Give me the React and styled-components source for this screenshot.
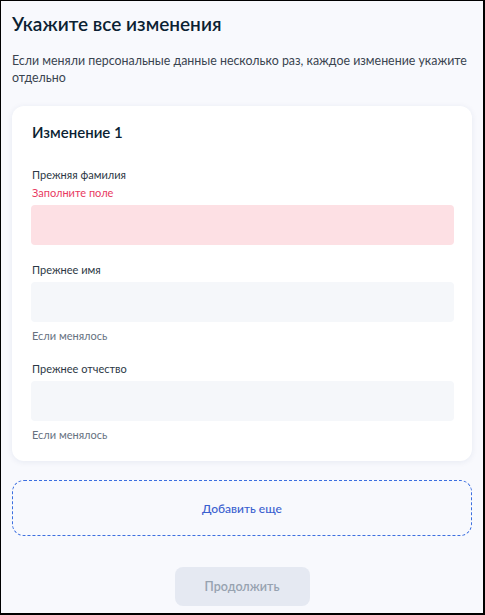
import React from 'react';
import styled, { createGlobalStyle } from 'styled-components';

const GlobalStyle = createGlobalStyle`
  html, body {
    margin: 0;
    padding: 0;
    background: #fff;
  }
  * {
    box-sizing: border-box;
  }
`;

const Page = styled.div`
  width: 485px;
  height: 615px;
  border-style: solid;
  border-color: #000;
  border-width: 1px 2px 2px 1px;
  background: #f8f9fd;
  font-family: Lato, 'Noto Sans', sans-serif;
  color: #0b1f33;
  padding: 0 11px;
  display: flex;
  flex-direction: column;
  overflow: hidden;
`;

const Title = styled.h1`
  margin: 9px 0 0;
  font-size: 19px;
  line-height: 28px;
  font-weight: 600;
`;

const Lead = styled.p`
  margin: 14px 0 0;
  font-size: 12.4px;
  line-height: 17px;
  color: #3a4450;
`;

const Card = styled.section`
  margin-top: 20px;
  background: #fff;
  border-radius: 12px;
  box-shadow: 0 1px 6px rgba(30, 55, 110, 0.08);
  padding: 15px 18px 18px 19px;
  display: flex;
  flex-direction: column;
`;

const CardTitle = styled.h2`
  margin: 0 0 24px 1px;
  font-size: 15px;
  line-height: 22px;
  font-weight: 600;
`;

const Field = styled.div`
  display: flex;
  flex-direction: column;
  & + & {
    margin-top: 17px;
  }
`;

const Label = styled.div`
  font-size: 11px;
  line-height: 16px;
  color: #2c3845;
  margin: 0 0 4px 1px;
`;

const Error = styled.div`
  font-size: 11px;
  line-height: 16px;
  color: #e83a5f;
  margin: -2px 0 4px 1px;
`;

const Input = styled.div`
  height: 40px;
  border-radius: 4px;
  background: ${p => (p.$error ? '#fde0e4' : '#f5f7fa')};
`;

const Hint = styled.div`
  font-size: 11px;
  line-height: 16px;
  color: #66727f;
  margin: 6px 0 0 1px;
`;

const AddButton = styled.button`
  margin-top: 19px;
  height: 56px;
  border: 1px dashed #3c6fe0;
  border-radius: 12px;
  background: transparent;
  color: #3a5fcf;
  font-family: inherit;
  font-size: 12px;
  font-weight: 500;
  cursor: pointer;
`;

const Footer = styled.div`
  display: flex;
  justify-content: center;
  margin-top: 31px;
`;

const SubmitButton = styled.button`
  width: 135px;
  height: 39px;
  border: none;
  border-radius: 8px;
  background: #e5e9f2;
  color: #97a2b0;
  font-family: inherit;
  font-size: 12.5px;
  font-weight: 600;
`;

const fields = [
  { label: 'Прежняя фамилия', error: 'Заполните поле' },
  { label: 'Прежнее имя', hint: 'Если менялось' },
  { label: 'Прежнее отчество', hint: 'Если менялось' },
];

export default function App() {
  return (
    <>
      <GlobalStyle />
      <Page>
        <Title>Укажите все изменения</Title>
        <Lead>
          Если меняли персональные данные несколько раз, каждое изменение укажите
          отдельно
        </Lead>
        <Card>
          <CardTitle>Изменение 1</CardTitle>
          {fields.map(f => (
            <Field key={f.label}>
              <Label>{f.label}</Label>
              {f.error && <Error>{f.error}</Error>}
              <Input $error={!!f.error} />
              {f.hint && <Hint>{f.hint}</Hint>}
            </Field>
          ))}
        </Card>
        <AddButton>Добавить еще</AddButton>
        <Footer>
          <SubmitButton disabled>Продолжить</SubmitButton>
        </Footer>
      </Page>
    </>
  );
}
